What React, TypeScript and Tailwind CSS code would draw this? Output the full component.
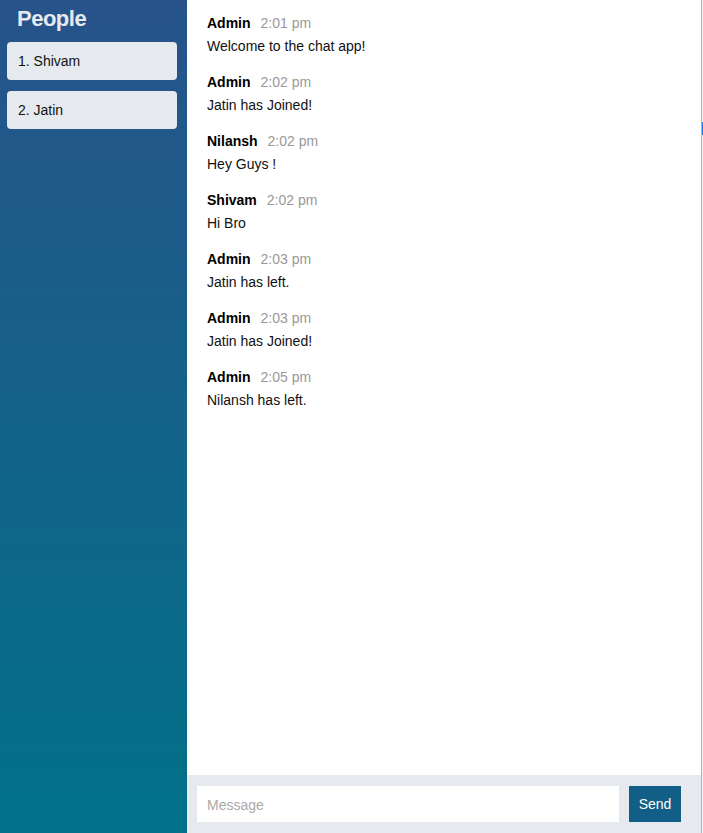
import React from "react";

interface Message {
    from: string;
    time: string;
    text: string;
}

const people = ["Shivam", "Jatin"];

const messages: Message[] = [
    { from: "Admin", time: "2:01 pm", text: "Welcome to the chat app!" },
    { from: "Admin", time: "2:02 pm", text: "Jatin has Joined!" },
    { from: "Nilansh", time: "2:02 pm", text: "Hey Guys !" },
    { from: "Shivam", time: "2:02 pm", text: "Hi Bro" },
    { from: "Admin", time: "2:03 pm", text: "Jatin has left." },
    { from: "Admin", time: "2:03 pm", text: "Jatin has Joined!" },
    { from: "Admin", time: "2:05 pm", text: "Nilansh has left." },
];

const App: React.FC = () => {
    return (
        <div className="flex h-[833px] w-[703px] overflow-hidden font-['Liberation_Sans',Arial,sans-serif] text-[14px]">
            {/* sidebar */}
            <aside className="flex w-[187px] shrink-0 flex-col bg-[linear-gradient(to_bottom,#27538a,#017189)]">
                <h3 className="pl-[17px] pt-[6px] text-[22px] font-bold leading-[26px] tracking-[-0.5px] text-[#e6eaee]">People</h3>
                <ol className="mt-[10px] flex flex-col gap-[11px] pl-[7px] pr-[10px]">
                    {people.map((p, i) => (
                        <li key={p} className="flex h-[38px] items-center rounded-[4px] bg-[#e6eaee] pl-[11px] pt-[1px] text-[#111]">
                            {i + 1}. {p}
                        </li>
                    ))}
                </ol>
            </aside>

            {/* chat */}
            <main className="flex w-[514px] shrink-0 flex-col bg-white">
                <ol className="flex flex-1 flex-col gap-[16px] pl-[20px] pt-[13px]">
                    {messages.map((m, i) => (
                        <li key={i} className="flex flex-col gap-[3px] leading-[20px]">
                            <div className="flex items-center gap-[10px]">
                                <span className="font-bold text-black">{m.from}</span>
                                <span className="text-[#999]">{m.time}</span>
                            </div>
                            <p className="text-[#111]">{m.text}</p>
                        </li>
                    ))}
                </ol>
                <div className="flex h-[58px] shrink-0 items-center gap-[10px] bg-[#e6eaee] pl-[10px] pr-[20px]">
                    <input
                        type="text"
                        placeholder="Message"
                        className="h-[36px] flex-1 bg-white px-[10px] pt-[1px] text-[14px] text-black outline-none placeholder:text-[#aaa]"
                    />
                    <button className="h-[36px] w-[52px] bg-[#115e86] pt-[1px] text-[14px] text-white">Send</button>
                </div>
            </main>

            {/* window edge */}
            <div className="flex w-[2px] shrink-0">
                <div className="w-[1px] bg-[#b3b3b3]" />
                <div className="flex w-[1px] flex-col bg-[#f2f2f2]">
                    <div className="h-[122px]" />
                    <div className="h-[13px] bg-[#1a7cf5]" />
                </div>
            </div>
        </div>
    );
};

export default App;
